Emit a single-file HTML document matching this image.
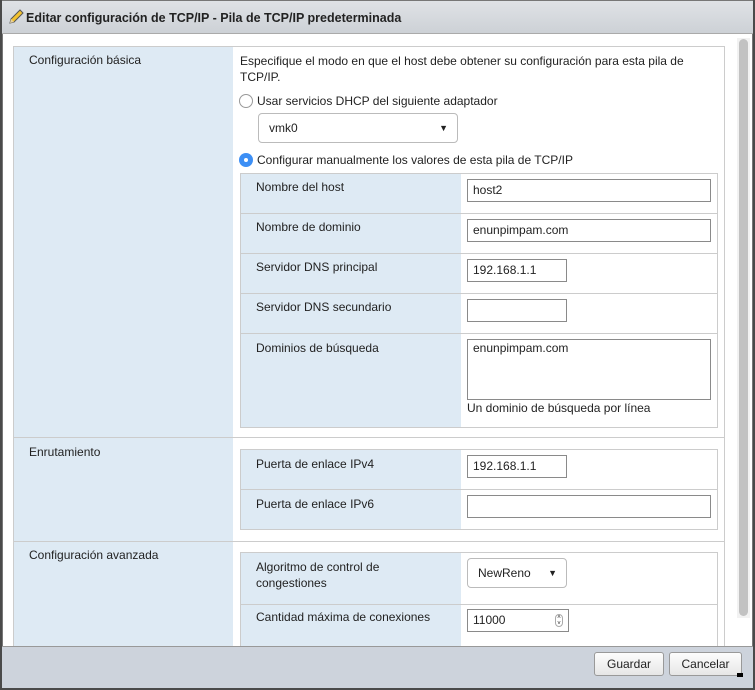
<!DOCTYPE html>
<html><head><meta charset="utf-8"><style>
*{box-sizing:border-box;margin:0;padding:0}
body{width:755px;height:690px;background:#4a4a4a;font-family:"Liberation Sans",Arial,sans-serif;font-size:12px;color:#222;position:relative;overflow:hidden}
.a{position:absolute}
.dlg{left:2px;top:0;width:751px;height:688px;background:#fff;border:1px solid #777}
.title{left:2px;top:1px;width:751px;height:33px;background:linear-gradient(#dfe2e6,#cdd1d6);border-bottom:1px solid #aaa;font-weight:bold;font-size:12.5px;line-height:34px;padding-left:24px;color:#222}
.foot{left:2px;top:646px;width:751px;height:42px;background:#cdd3dc;border-top:1px solid #999}
.btn{height:24px;top:652px;border:1px solid #999;border-radius:3px;background:linear-gradient(#fdfdfd,#e6e6e6);text-align:center;line-height:22px;font-size:12px}
.lb{background:#deeaf4}
.bd{border:1px solid #ccc}
.inp{background:#fff;border:1px solid #8a8a8a;height:23px;line-height:21px;padding-left:5px}
.sel{background:#fff;border:1px solid #bbb;border-radius:4px;padding-left:10px;line-height:28px}
.radio{width:14px;height:14px;border-radius:50%;border:1px solid #999;background:#fff}
</style></head><body>
<div class="a dlg"></div>
<div class="a title">Editar configuración de TCP/IP - Pila de TCP/IP predeterminada</div>
<svg class="a" style="left:8px;top:9px" width="16" height="16" viewBox="0 0 16 16"><path d="M2 14 L3 10 L12 1 L15 4 L6 13 Z" fill="#f2c230" stroke="#555" stroke-width="1"/><path d="M2 14 L3 10 L6 13 Z" fill="#e8d2a0"/></svg>

<!-- outer table -->
<div class="a bd" style="left:13px;top:46px;width:712px;height:610px"></div>
<div class="a lb" style="left:14px;top:47px;width:219px;height:600px"></div>
<div class="a" style="left:14px;top:437px;width:710px;height:1px;background:#ccc"></div>
<div class="a" style="left:14px;top:541px;width:710px;height:1px;background:#ccc"></div>
<div class="a" style="left:29px;top:53px">Configuración básica</div>
<div class="a" style="left:29px;top:445px">Enrutamiento</div>
<div class="a" style="left:29px;top:548px">Configuración avanzada</div>

<div class="a" style="left:240px;top:53px;line-height:16px;width:470px">Especifique el modo en que el host debe obtener su configuración para esta pila de TCP/IP.</div>
<div class="a radio" style="left:239px;top:94px"></div>
<div class="a" style="left:257px;top:94px">Usar servicios DHCP del siguiente adaptador</div>
<div class="a sel" style="left:258px;top:113px;width:200px;height:30px">vmk0<span style="position:absolute;right:9px;top:0;font-size:9px">▼</span></div>
<div class="a" style="left:239px;top:153px;width:14px;height:14px;border-radius:50%;background:#3d8ff5"><div style="position:absolute;left:5px;top:5px;width:4px;height:4px;border-radius:50%;background:#fff"></div></div>
<div class="a" style="left:257px;top:153px">Configurar manualmente los valores de esta pila de TCP/IP</div>

<!-- inner table 1 -->
<div class="a bd" style="left:240px;top:173px;width:478px;height:255px"></div>
<div class="a lb" style="left:241px;top:174px;width:220px;height:253px"></div>
<div class="a" style="left:241px;top:213px;width:476px;height:1px;background:#ccc"></div>
<div class="a" style="left:241px;top:253px;width:476px;height:1px;background:#ccc"></div>
<div class="a" style="left:241px;top:293px;width:476px;height:1px;background:#ccc"></div>
<div class="a" style="left:241px;top:333px;width:476px;height:1px;background:#ccc"></div>
<div class="a" style="left:256px;top:180px">Nombre del host</div>
<div class="a" style="left:256px;top:220px">Nombre de dominio</div>
<div class="a" style="left:256px;top:260px">Servidor DNS principal</div>
<div class="a" style="left:256px;top:300px">Servidor DNS secundario</div>
<div class="a" style="left:256px;top:341px">Dominios de búsqueda</div>
<div class="a inp" style="left:467px;top:179px;width:244px">host2</div>
<div class="a inp" style="left:467px;top:219px;width:244px">enunpimpam.com</div>
<div class="a inp" style="left:467px;top:259px;width:100px">192.168.1.1</div>
<div class="a inp" style="left:467px;top:299px;width:100px"></div>
<div class="a inp" style="left:467px;top:339px;width:244px;height:61px;line-height:16px">enunpimpam.com</div>
<div class="a" style="left:467px;top:401px">Un dominio de búsqueda por línea</div>

<!-- inner table 2 -->
<div class="a bd" style="left:240px;top:449px;width:478px;height:81px"></div>
<div class="a lb" style="left:241px;top:450px;width:220px;height:79px"></div>
<div class="a" style="left:241px;top:489px;width:476px;height:1px;background:#ccc"></div>
<div class="a" style="left:256px;top:457px">Puerta de enlace IPv4</div>
<div class="a" style="left:256px;top:497px">Puerta de enlace IPv6</div>
<div class="a inp" style="left:467px;top:455px;width:100px">192.168.1.1</div>
<div class="a inp" style="left:467px;top:495px;width:244px"></div>

<!-- inner table 3 -->
<div class="a bd" style="left:240px;top:552px;width:478px;height:110px"></div>
<div class="a lb" style="left:241px;top:553px;width:220px;height:100px"></div>
<div class="a" style="left:241px;top:604px;width:476px;height:1px;background:#ccc"></div>
<div class="a" style="left:256px;top:559px;line-height:16px">Algoritmo de control de<br>congestiones</div>
<div class="a" style="left:256px;top:610px">Cantidad máxima de conexiones</div>
<div class="a sel" style="left:467px;top:558px;width:100px;height:30px">NewReno<span style="position:absolute;right:9px;top:0;font-size:9px">▼</span></div>
<div class="a inp" style="left:467px;top:609px;width:102px">11000<span style="position:absolute;right:5px;top:4px;width:8px;height:13px;border:1px solid #aaa;border-radius:4px;font-size:6px;line-height:6px;text-align:center">˄<br>˅</span></div>

<!-- scrollbar -->
<div class="a" style="left:737px;top:38px;width:13px;height:580px;background:#f2f2f2"></div>
<div class="a" style="left:739px;top:39px;width:9px;height:577px;background:#c2c2c2;border-radius:5px"></div>

<div class="a foot"></div>
<div class="a btn" style="left:594px;top:652px;width:70px">Guardar</div>
<div class="a btn" style="left:669px;top:652px;width:73px">Cancelar</div>
<div class="a" style="left:737px;top:673px;width:6px;height:4px;background:#000"></div>
</body></html>
